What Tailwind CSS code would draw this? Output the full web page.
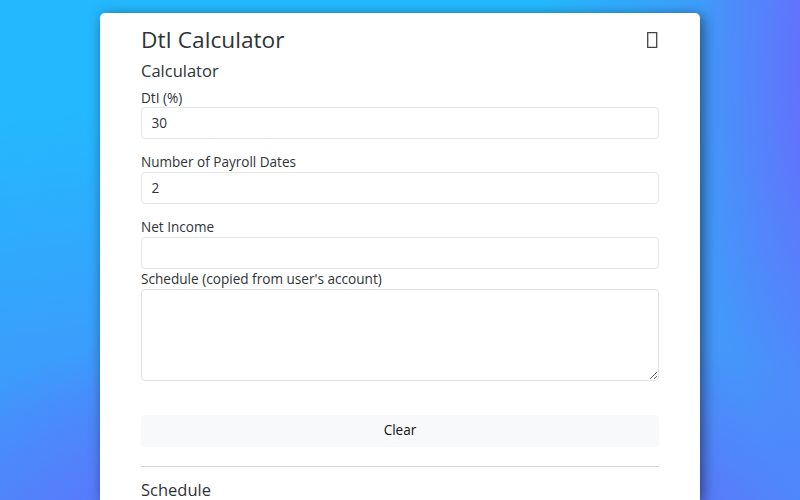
<!DOCTYPE html>
<html lang="en">
<head>
<meta charset="utf-8">
<title>DtI Calculator</title>
<script src="https://cdn.jsdelivr.net/npm/@tailwindcss/browser@4"></script>
</head>
<body class="h-screen overflow-hidden bg-[#4398fa] bg-[radial-gradient(ellipse_135px_440px_at_835px_70px,#6272fc_0%,#6272fc_25%,#6272fc00_100%),radial-gradient(ellipse_590px_300px_at_400px_600px,#6569fc_0%,#6569fc_35%,#6569fc00_100%),linear-gradient(90deg,#4398fa00_68%,#4398fa_91%),linear-gradient(172deg,#24b8fe_0%,#24b8fe_20%,#3f98fb_68%,#4a90fa_100%)] font-['Open_Sans',sans-serif] text-[#303336]">
<main class="mx-auto mt-[13px] h-[487px] w-[600px] rounded-t-[5px] bg-white px-[41px] pt-3 shadow-[3px_3px_14px_rgba(0,0,0,0.5)]">
  <header class="flex h-[30px] items-center justify-between">
    <h1 class="text-[22.7px] leading-[30px]">DtI Calculator</h1>
    <svg class="mr-px h-4 w-[11px]" viewBox="0 0 11 16" fill="none" stroke="#444" stroke-width="1.3"><path d="M.7.7h9v14.6h-9z"/></svg>
  </header>
  <h2 class="mt-[4px] text-[16.5px] leading-6">Calculator</h2>
  <form>
    <label class="mt-[5px] block text-[13.6px] leading-[19px]">DtI (%)</label>
    <input class="block h-8 w-full rounded border border-[#e5e6e8] px-[9.5px] pb-[2px] text-[13.6px]" value="30">
    <label class="mt-[13px] block text-[13.55px] leading-5">Number of Payroll Dates</label>
    <input class="block h-8 w-full rounded border border-[#e5e6e8] px-[9.5px] pb-[2px] text-[13.6px]" value="2">
    <label class="mt-[13px] block text-[13.55px] leading-5">Net Income</label>
    <input class="block h-8 w-full rounded border border-[#e5e6e8] px-[9.5px] pb-[2px] text-[13.6px]">
    <label class="block text-[13.6px] leading-5">Schedule (copied from user's account)</label>
    <textarea class="block h-[92px] w-full rounded border border-[#e0e2e4]"></textarea>
    <button type="button" class="mt-[34px] block h-8 w-full rounded bg-[#f8f9fa] pb-[2px] text-[13.6px] text-[#111]">Clear</button>
  </form>
  <hr class="mt-[19px] border-[#d3d4d5]">
  <h2 class="mt-[11px] text-[16.5px] leading-6">Schedule</h2>
</main>
</body>
</html>
